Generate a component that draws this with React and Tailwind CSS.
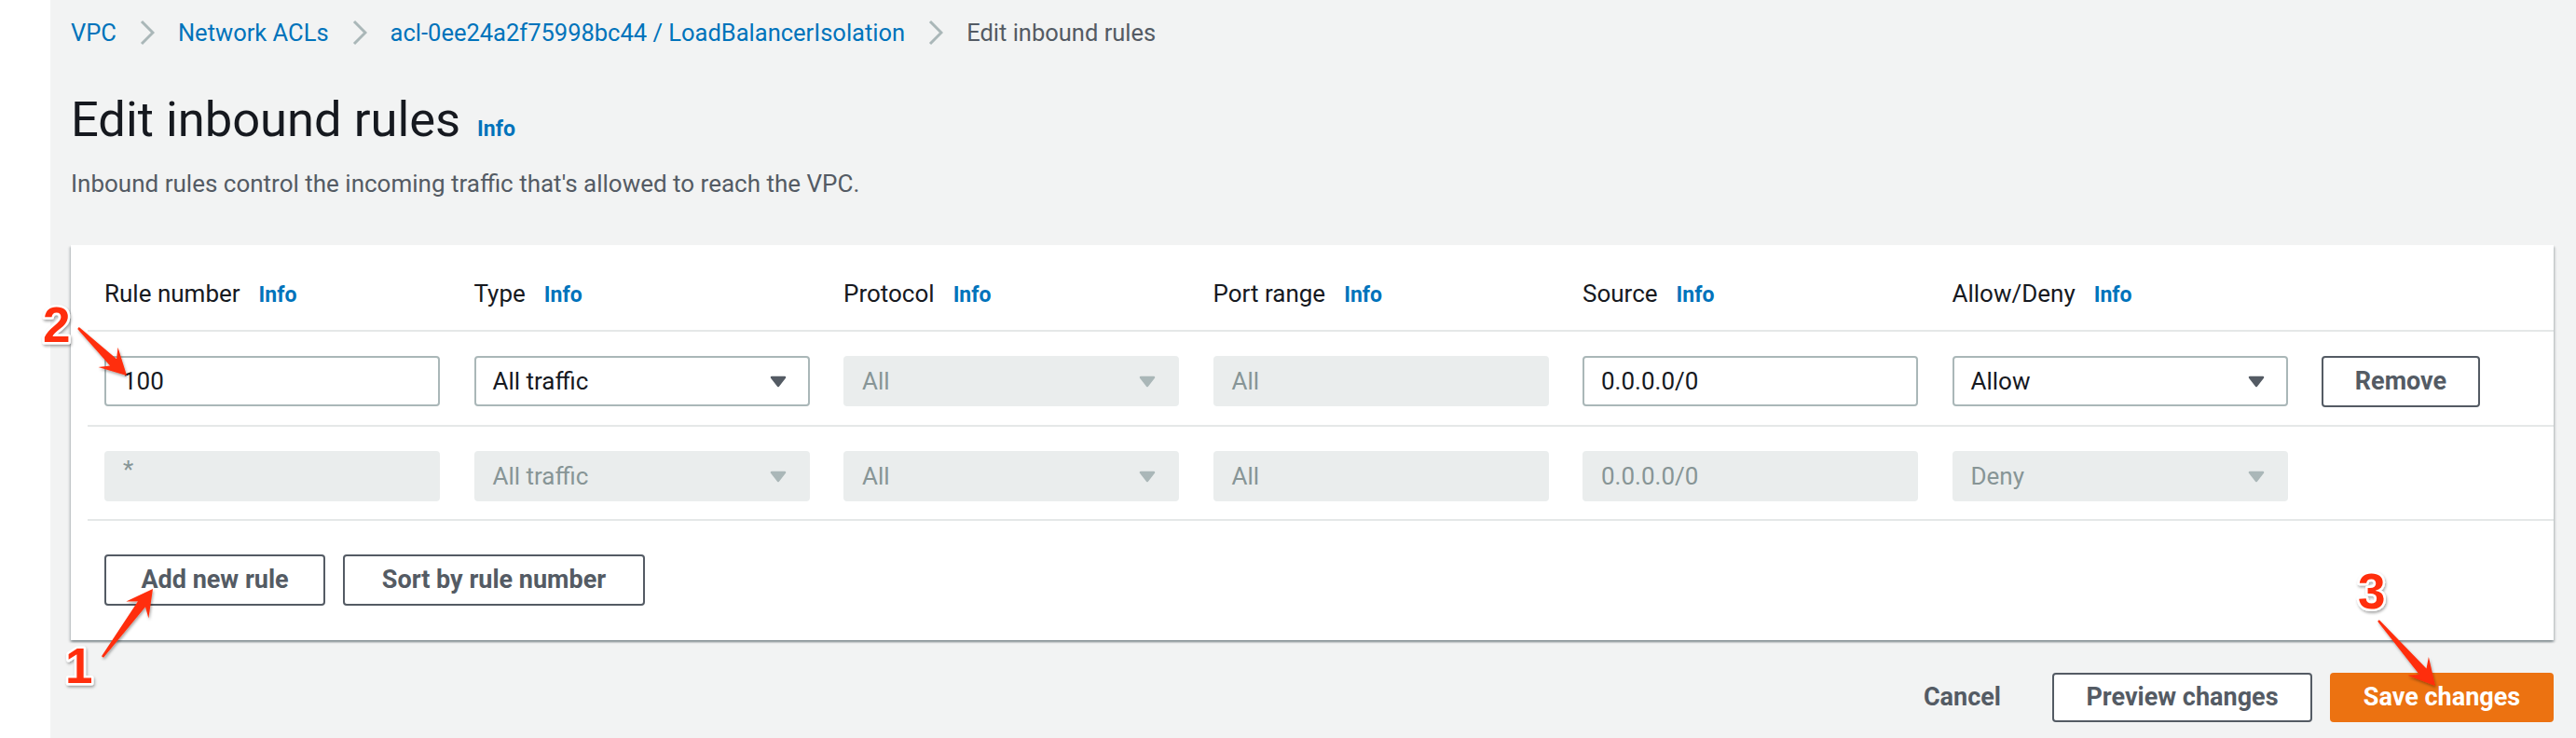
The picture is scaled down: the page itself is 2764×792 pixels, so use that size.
import React from "react";

const columns = ["Rule number", "Type", "Protocol", "Port range", "Source", "Allow/Deny"];

const rows = [
    [
        { value: "100" },
        { value: "All traffic", select: true },
        { value: "All", select: true, disabled: true },
        { value: "All", disabled: true },
        { value: "0.0.0.0/0" },
        { value: "Allow", select: true },
    ],
    [
        { value: "*", disabled: true },
        { value: "All traffic", select: true, disabled: true },
        { value: "All", select: true, disabled: true },
        { value: "All", disabled: true },
        { value: "0.0.0.0/0", disabled: true },
        { value: "Deny", select: true, disabled: true },
    ],
];

function Chevron() {
    return (
        <svg width="16" height="28" viewBox="0 0 16 28" className="mx-[25px] shrink-0">
            <polyline points="2,2 14,14 2,26" fill="none" stroke="#aab7b8" strokeWidth="3" />
        </svg>
    );
}

function Caret({ disabled }) {
    return (
        <svg width="18" height="13" viewBox="0 0 18 13" className="shrink-0">
            <path
                d="M2 2 H16 L9 11 Z"
                fill={disabled ? "#aab7b8" : "#545b64"}
                stroke={disabled ? "#aab7b8" : "#545b64"}
                strokeWidth="2.5"
                strokeLinejoin="round"
            />
        </svg>
    );
}

function Info({ className = "" }) {
    return <span className={`text-[23px] font-bold text-[#0073bb] ${className}`}>Info</span>;
}

function Field({ value, select, disabled }) {
    return (
        <div
            className={`flex h-[54px] w-[360px] items-center justify-between rounded-[4px] border-2 pl-[18px] pr-[23px] text-[26px] ${
                disabled
                    ? "border-[#eaeded] bg-[#eaeded] text-[#879596]"
                    : "border-[#aab7b8] bg-white text-[#16191f]"
            }`}
        >
            <span className={value === "*" ? "-mt-[14px]" : ""}>{value}</span>
            {select && <Caret disabled={disabled} />}
        </div>
    );
}

function OutlineButton({ children, className = "" }) {
    return (
        <button
            className={`flex items-center justify-center rounded-[4px] border-2 border-[#545b64] bg-white text-[27px] font-bold text-[#545b64] ${className}`}
        >
            {children}
        </button>
    );
}

function arrowPoints(tail, tip, headLen = 28, headW = 15, neckW = 5, tailW = 1.2) {
    const [tx, ty] = tail;
    const [px, py] = tip;
    const len = Math.hypot(px - tx, py - ty);
    const ux = (px - tx) / len;
    const uy = (py - ty) / len;
    const nx = -uy;
    const ny = ux;
    const neck = [px - ux * headLen * 0.72, py - uy * headLen * 0.72];
    const barb = [px - ux * headLen, py - uy * headLen];
    const pts = [
        [tx + nx * tailW, ty + ny * tailW],
        [neck[0] + nx * neckW, neck[1] + ny * neckW],
        [barb[0] + nx * headW, barb[1] + ny * headW],
        [px, py],
        [barb[0] - nx * headW, barb[1] - ny * headW],
        [neck[0] - nx * neckW, neck[1] - ny * neckW],
        [tx - nx * tailW, ty - ny * tailW],
    ];
    return pts.map((p) => p.map((n) => n.toFixed(1)).join(",")).join(" ");
}

function Annotations() {
    const red = "#ff2d0a";
    const arrows = [
        { tail: [84, 352], tip: [136, 403] },
        { tail: [110, 705], tip: [164, 632] },
        { tail: [2552, 666], tip: [2613, 736] },
    ];
    const labels = [
        { text: "2", x: 46, y: 367 },
        { text: "1", x: 70, y: 733 },
        { text: "3", x: 2530, y: 653 },
    ];
    return (
        <svg className="pointer-events-none absolute inset-0" width="2764" height="792" viewBox="0 0 2764 792">
            <defs>
                <filter id="shade" x="-20%" y="-20%" width="140%" height="140%">
                    <feDropShadow dx="1" dy="2" stdDeviation="1.5" floodColor="#000" floodOpacity="0.35" />
                </filter>
            </defs>
            {arrows.map((a, i) => (
                <polygon key={i} points={arrowPoints(a.tail, a.tip)} fill={red} filter="url(#shade)" />
            ))}
            {labels.map((l) => (
                <text
                    key={l.text}
                    x={l.x}
                    y={l.y}
                    fontFamily="'Liberation Sans', Arial, sans-serif"
                    fontWeight="bold"
                    fontSize="53"
                    fill={red}
                    stroke="#fff"
                    strokeWidth="5"
                    paintOrder="stroke"
                    strokeLinejoin="round"
                    filter="url(#shade)"
                >
                    {l.text}
                </text>
            ))}
        </svg>
    );
}

export default function App() {
    return (
        <div className="relative flex h-[792px] w-[2764px] overflow-hidden bg-[#f2f3f3] font-['Roboto',_sans-serif]">
            <div className="w-[54px] shrink-0 bg-white" />

            <main className="flex-1 pl-[22px] pr-[24px]">
                <nav className="flex items-center pt-[20px] text-[25.5px] leading-[30px]">
                    <span className="text-[#0073bb]">VPC</span>
                    <Chevron />
                    <span className="text-[#0073bb]">Network ACLs</span>
                    <Chevron />
                    <span className="text-[#0073bb]">acl-0ee24a2f75998bc44 / LoadBalancerIsolation</span>
                    <Chevron />
                    <span className="text-[#545b64]">Edit inbound rules</span>
                </nav>

                <div className="mt-[48px] flex items-baseline gap-[18px]">
                    <h1 className="text-[52.5px] leading-[60px] text-[#16191f]">Edit inbound rules</h1>
                    <Info />
                </div>

                <p className="mt-[24px] text-[26px] leading-[30px] text-[#545b64]">
                    Inbound rules control the incoming traffic that's allowed to reach the VPC.
                </p>

                <section className="mt-[51px] bg-white pb-[37px] shadow-[0_2px_2px_0_rgba(0,28,36,0.3),2px_2px_2px_0_rgba(0,28,36,0.12),-2px_2px_2px_0_rgba(0,28,36,0.12)]">
                    <div className="ml-[18px]">
                        <div className="flex border-b-2 border-[#e5e8e8] pb-[22px] pt-[37px]">
                            {columns.map((label) => (
                                <div key={label} className="flex w-[396.5px] shrink-0 items-baseline gap-[20px] px-[18px] text-[26px] leading-[30px] text-[#16191f]">
                                    <span>{label}</span>
                                    <Info />
                                </div>
                            ))}
                        </div>

                        {rows.map((row, r) => (
                            <div key={r} className="flex border-b-2 border-[#e5e8e8] pb-[19px] pt-[26px]">
                                {row.map((cell, c) => (
                                    <div key={c} className="w-[396.5px] shrink-0 px-[18px]">
                                        <Field {...cell} />
                                    </div>
                                ))}
                                {r === 0 && (
                                    <div className="pl-[18px]">
                                        <OutlineButton className="h-[55px] w-[170px]">Remove</OutlineButton>
                                    </div>
                                )}
                            </div>
                        ))}
                    </div>

                    <div className="ml-[36px] mt-[36px] flex gap-[19px]">
                        <OutlineButton className="h-[55px] w-[237px]">Add new rule</OutlineButton>
                        <OutlineButton className="h-[55px] w-[324px]">Sort by rule number</OutlineButton>
                    </div>
                </section>

                <div className="mt-[35px] flex items-center justify-end">
                    <button className="mr-[55px] text-[27px] font-bold text-[#545b64]">Cancel</button>
                    <OutlineButton className="h-[53px] w-[279px]">Preview changes</OutlineButton>
                    <button className="ml-[19px] h-[53px] w-[240px] rounded-[4px] bg-[#ec7211] text-[27px] font-bold text-white">
                        Save changes
                    </button>
                </div>
            </main>

            <Annotations />
        </div>
    );
}
